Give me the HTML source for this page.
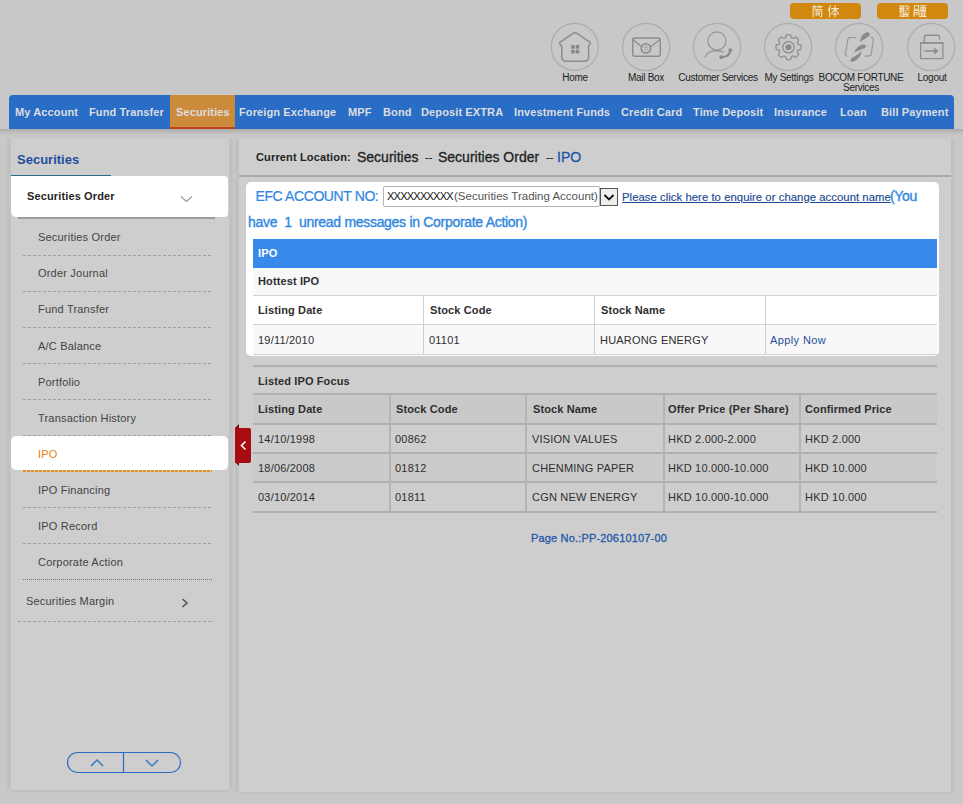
<!DOCTYPE html>
<html><head><meta charset="utf-8">
<style>
*{margin:0;padding:0;box-sizing:border-box}
html,body{width:963px;height:804px;overflow:hidden;background:#c8c8c8;font-family:"Liberation Sans",sans-serif;position:relative}
.a{position:absolute;white-space:nowrap;line-height:1}
.lang{position:absolute;top:2.5px;width:71px;height:16px;background:#d2870f;border-radius:4px;color:#f6ead6;font-size:11px;line-height:18.5px;text-align:center;letter-spacing:5px;text-indent:5px}
.ico{position:absolute;top:23px;width:48px;height:48px;border:1px solid #b0b0b0;border-radius:50%}
.ico svg{position:absolute;left:0;top:0}
.lbl{position:absolute;font-size:10px;line-height:10px;margin-top:1px;color:#222;text-align:center;letter-spacing:-0.3px;width:100px;white-space:nowrap}
#nav{position:absolute;left:9px;top:95px;width:945px;height:34px;background:#2a6dc6;border-radius:4px 4px 0 0}
#navsh{position:absolute;left:0;top:129px;width:963px;height:10px;background:linear-gradient(#a9a9a9 0,#b4b4b4 1.5px,#bdbdbd 3.5px,#c3c3c3 5px,#c8c8c8 6.5px)}
.ni{position:absolute;top:107px;font-size:11px;font-weight:bold;color:#dcdde0;line-height:11px;white-space:nowrap;letter-spacing:0.12px}
#sectab{position:absolute;left:170px;top:95px;width:65px;height:34px;background:#cc8b3a;border-bottom:2px solid #c0441f}
.panel{position:absolute;background:#cecece}
.strip{position:absolute;background:#c1c1c1}
.mi{position:absolute;left:38px;font-size:11px;color:#444;line-height:11px;white-space:nowrap;letter-spacing:0.2px}
.dash{position:absolute;left:23px;width:189px;height:1px;background:repeating-linear-gradient(90deg,#a0a0a0 0 3px,transparent 3px 5px)}
.t{position:absolute;font-size:11px;line-height:11px;color:#2e2e2e;white-space:nowrap;letter-spacing:0.2px}
.tb{font-weight:bold;letter-spacing:0.12px}
.hl{position:absolute;height:1px;background:#d0d0d0}
.vl{position:absolute;width:1px;background:#d0d0d0}
.hl2{position:absolute;height:2px;background:#afafaf}
.vl2{position:absolute;width:2px;background:#b4b4b4}
</style></head><body>

<!-- language buttons -->
<div class="lang" style="left:790px"></div>
<svg class="a" style="left:812px;top:5px" width="28" height="13" viewBox="0 0 28 13" fill="none" stroke="#f2e4cc" stroke-width="1.05" stroke-linecap="square">
<path d="M2 0.8 L0.8 2.8 M1.5 1.6 H4.5 M3 1.6 V2.8 M7 0.8 L5.8 2.8 M6.5 1.6 H10 M8.3 1.6 V2.8"/>
<path d="M1.2 4.2 V11.6 M2.2 3.6 L2.8 4.2 M3.6 4.6 H9.6 V11 Q9.6 11.8 8.6 11.6"/>
<path d="M4 6.3 H7.2 V10 H4 Z M4 8.2 H7.2"/>
<path d="M18.5 0.6 L16.4 5.2 M17.6 3.2 V11.8 M19.6 3.6 H26.4 M23 0.6 V11.8 M23 3.8 L19.4 8.8 M23 3.8 L26.6 8.8 M21 9.2 H25"/>
</svg>
<div class="lang" style="left:877px"></div>
<svg class="a" style="left:899px;top:5px" width="28" height="12" viewBox="0 0 28 12" fill="none" stroke="#f2e4cc" stroke-width="1.05" stroke-linecap="square">
<path d="M0.8 1 H5 M1.2 1 V6.5 M4.6 1 V6.5 M0.8 3.6 H5 M0.8 6.2 H5 M2.8 1.5 V6"/>
<path d="M6.4 0.8 L9.8 1.6 M7 2.8 L10 5.6 M10 2.8 L6.6 5.8"/>
<path d="M0.6 8 H10.2 M2 9.6 L1 11.2 M4.2 8.6 V11.4 M5.4 9.6 H8.6 M8.2 9.8 L9.6 11.2 M1.8 11.2 H8"/>
<path d="M15.4 0.8 H19.6 V4.2 H15.4 Z M15 5.4 V11.6 M15 5.4 H20 V11.6 M16.2 7.4 H18.8 M16.2 9.2 H18.8"/>
<path d="M21.2 0.8 H27 M21.8 2.4 H26.4 V5.4 H21.8 Z M24.1 0.8 V5.4 M21.8 3.9 H26.4 M21.6 6.8 H26.6 M22.2 8.2 H26 V10 H22.2 Z M23 10.6 L22.6 11.4 M25.4 10.6 L25.8 11.4 M21.2 11.6 H27"/>
</svg>

<!-- header icons -->
<svg class="a" style="left:550px;top:22px" width="50" height="50" viewBox="0 0 50 50"><circle cx="24.8" cy="24.9" r="23.5" fill="none" stroke="#adadad" stroke-width="1.25"/><path d="M11.8 24 L9.9 22.1 Q9 21 10.3 20.1 L23 11.3 Q25 10 27 11.3 L39.7 20.1 Q41 21 40.1 22.1 L38.6 24 L38.6 35 Q38.6 39.3 34.3 39.3 L16.1 39.3 Q11.8 39.3 11.8 35 Z" fill="none" stroke="#8d8d8d" stroke-width="1.5" stroke-linejoin="round"/><rect x="21.2" y="23.1" width="3.5" height="3.6" fill="#878787"/><rect x="25.7" y="23.1" width="3.5" height="3.6" fill="#878787"/><rect x="21.2" y="27.8" width="3.5" height="3.6" fill="#878787"/><rect x="25.7" y="27.8" width="3.5" height="3.6" fill="#878787"/></svg>
<svg class="a" style="left:621px;top:22px" width="50" height="50" viewBox="0 0 50 50"><circle cx="25.1" cy="25" r="23.6" fill="none" stroke="#adadad" stroke-width="1.25"/><rect x="11.7" y="16" width="27.6" height="18.2" rx="2" fill="none" stroke="#8d8d8d" stroke-width="1.4"/><path d="M12 17.6 L20.3 24.6 M38.9 17.6 L30 24.6" stroke="#8d8d8d" stroke-width="1.3" fill="none"/><circle cx="24.9" cy="26.4" r="4.6" fill="none" stroke="#8a8a8a" stroke-width="1.6"/><path d="M23 25.8 H26.8 M23.2 27.6 Q25 29.2 26.8 27.6 M23.4 24.6 Q25 23.2 26.6 24.6" stroke="#999" stroke-width="0.8" fill="none"/></svg>
<svg class="a" style="left:692px;top:22px" width="50" height="50" viewBox="0 0 50 50"><circle cx="25" cy="25" r="23.6" fill="none" stroke="#adadad" stroke-width="1.25"/><circle cx="24.9" cy="19" r="9.1" fill="none" stroke="#939393" stroke-width="1.2"/><path d="M12.8 35.6 Q15.5 29.2 22 28.9 Q28.5 28.7 32 30.3" fill="none" stroke="#939393" stroke-width="1.1"/><path d="M38.2 28.2 Q38 34.8 29.3 35.2" fill="none" stroke="#8a8a8a" stroke-width="2.1" stroke-linecap="round"/><circle cx="38.3" cy="28.2" r="1.9" fill="#8a8a8a"/><circle cx="29.2" cy="35.2" r="1.9" fill="#8a8a8a"/></svg>
<svg class="a" style="left:763px;top:22px" width="50" height="50" viewBox="0 0 50 50"><circle cx="25.1" cy="25" r="23.6" fill="none" stroke="#adadad" stroke-width="1.25"/><path d="M38.00 25.20 L38.00 25.45 L37.99 25.69 L37.97 25.94 L37.95 26.18 L37.92 26.42 L37.87 26.66 L37.81 26.90 L37.70 27.13 L37.53 27.35 L37.25 27.54 L36.85 27.69 L36.35 27.80 L35.84 27.90 L35.42 28.00 L35.12 28.12 L34.90 28.26 L34.75 28.41 L34.63 28.57 L34.54 28.74 L34.46 28.91 L34.39 29.09 L34.34 29.28 L34.31 29.47 L34.31 29.69 L34.36 29.94 L34.50 30.24 L34.72 30.61 L35.01 31.03 L35.29 31.46 L35.46 31.86 L35.52 32.19 L35.49 32.46 L35.41 32.70 L35.29 32.91 L35.15 33.12 L35.00 33.31 L34.84 33.50 L34.68 33.68 L34.51 33.86 L34.34 34.04 L34.16 34.21 L33.98 34.38 L33.80 34.54 L33.61 34.70 L33.42 34.85 L33.21 34.99 L33.00 35.11 L32.76 35.19 L32.49 35.22 L32.16 35.16 L31.76 34.99 L31.33 34.71 L30.91 34.42 L30.54 34.20 L30.24 34.06 L29.99 34.01 L29.77 34.01 L29.58 34.04 L29.39 34.09 L29.21 34.16 L29.04 34.24 L28.87 34.33 L28.71 34.45 L28.56 34.60 L28.42 34.82 L28.30 35.12 L28.20 35.54 L28.10 36.05 L27.99 36.55 L27.84 36.95 L27.65 37.23 L27.43 37.40 L27.20 37.51 L26.96 37.57 L26.72 37.62 L26.48 37.65 L26.24 37.67 L25.99 37.69 L25.75 37.70 L25.50 37.70 L25.25 37.70 L25.01 37.69 L24.76 37.67 L24.52 37.65 L24.28 37.62 L24.04 37.57 L23.80 37.51 L23.57 37.40 L23.35 37.23 L23.16 36.95 L23.01 36.55 L22.90 36.05 L22.80 35.54 L22.70 35.12 L22.58 34.82 L22.44 34.60 L22.29 34.45 L22.13 34.33 L21.96 34.24 L21.79 34.16 L21.61 34.09 L21.42 34.04 L21.23 34.01 L21.01 34.01 L20.76 34.06 L20.46 34.20 L20.09 34.42 L19.67 34.71 L19.24 34.99 L18.84 35.16 L18.51 35.22 L18.24 35.19 L18.00 35.11 L17.79 34.99 L17.58 34.85 L17.39 34.70 L17.20 34.54 L17.02 34.38 L16.84 34.21 L16.66 34.04 L16.49 33.86 L16.32 33.68 L16.16 33.50 L16.00 33.31 L15.85 33.12 L15.71 32.91 L15.59 32.70 L15.51 32.46 L15.48 32.19 L15.54 31.86 L15.71 31.46 L15.99 31.03 L16.28 30.61 L16.50 30.24 L16.64 29.94 L16.69 29.69 L16.69 29.47 L16.66 29.28 L16.61 29.09 L16.54 28.91 L16.46 28.74 L16.37 28.57 L16.25 28.41 L16.10 28.26 L15.88 28.12 L15.58 28.00 L15.16 27.90 L14.65 27.80 L14.15 27.69 L13.75 27.54 L13.47 27.35 L13.30 27.13 L13.19 26.90 L13.13 26.66 L13.08 26.42 L13.05 26.18 L13.03 25.94 L13.01 25.69 L13.00 25.45 L13.00 25.20 L13.00 24.95 L13.01 24.71 L13.03 24.46 L13.05 24.22 L13.08 23.98 L13.13 23.74 L13.19 23.50 L13.30 23.27 L13.47 23.05 L13.75 22.86 L14.15 22.71 L14.65 22.60 L15.16 22.50 L15.58 22.40 L15.88 22.28 L16.10 22.14 L16.25 21.99 L16.37 21.83 L16.46 21.66 L16.54 21.49 L16.61 21.31 L16.66 21.12 L16.69 20.93 L16.69 20.71 L16.64 20.46 L16.50 20.16 L16.28 19.79 L15.99 19.37 L15.71 18.94 L15.54 18.54 L15.48 18.21 L15.51 17.94 L15.59 17.70 L15.71 17.49 L15.85 17.28 L16.00 17.09 L16.16 16.90 L16.32 16.72 L16.49 16.54 L16.66 16.36 L16.84 16.19 L17.02 16.02 L17.20 15.86 L17.39 15.70 L17.58 15.55 L17.79 15.41 L18.00 15.29 L18.24 15.21 L18.51 15.18 L18.84 15.24 L19.24 15.41 L19.67 15.69 L20.09 15.98 L20.46 16.20 L20.76 16.34 L21.01 16.39 L21.23 16.39 L21.42 16.36 L21.61 16.31 L21.79 16.24 L21.96 16.16 L22.13 16.07 L22.29 15.95 L22.44 15.80 L22.58 15.58 L22.70 15.28 L22.80 14.86 L22.90 14.35 L23.01 13.85 L23.16 13.45 L23.35 13.17 L23.57 13.00 L23.80 12.89 L24.04 12.83 L24.28 12.78 L24.52 12.75 L24.76 12.73 L25.01 12.71 L25.25 12.70 L25.50 12.70 L25.75 12.70 L25.99 12.71 L26.24 12.73 L26.48 12.75 L26.72 12.78 L26.96 12.83 L27.20 12.89 L27.43 13.00 L27.65 13.17 L27.84 13.45 L27.99 13.85 L28.10 14.35 L28.20 14.86 L28.30 15.28 L28.42 15.58 L28.56 15.80 L28.71 15.95 L28.87 16.07 L29.04 16.16 L29.21 16.24 L29.39 16.31 L29.58 16.36 L29.77 16.39 L29.99 16.39 L30.24 16.34 L30.54 16.20 L30.91 15.98 L31.33 15.69 L31.76 15.41 L32.16 15.24 L32.49 15.18 L32.76 15.21 L33.00 15.29 L33.21 15.41 L33.42 15.55 L33.61 15.70 L33.80 15.86 L33.98 16.02 L34.16 16.19 L34.34 16.36 L34.51 16.54 L34.68 16.72 L34.84 16.90 L35.00 17.09 L35.15 17.28 L35.29 17.49 L35.41 17.70 L35.49 17.94 L35.52 18.21 L35.46 18.54 L35.29 18.94 L35.01 19.37 L34.72 19.79 L34.50 20.16 L34.36 20.46 L34.31 20.71 L34.31 20.93 L34.34 21.12 L34.39 21.31 L34.46 21.49 L34.54 21.66 L34.63 21.83 L34.75 21.99 L34.90 22.14 L35.12 22.28 L35.42 22.40 L35.84 22.50 L36.35 22.60 L36.85 22.71 L37.25 22.86 L37.53 23.05 L37.70 23.27 L37.81 23.50 L37.87 23.74 L37.92 23.98 L37.95 24.22 L37.97 24.46 L37.99 24.71 L38.00 24.95 Z" fill="none" stroke="#8f8f8f" stroke-width="1.3" stroke-linejoin="round"/><circle cx="25.5" cy="25.2" r="5.7" fill="none" stroke="#8f8f8f" stroke-width="1.3"/><circle cx="25.5" cy="25.2" r="2.9" fill="#8a8a8a"/></svg>
<svg class="a" style="left:834px;top:22px" width="50" height="50" viewBox="0 0 50 50"><circle cx="25.1" cy="25" r="23.6" fill="none" stroke="#adadad" stroke-width="1.25"/><path d="M22 15.6 L15.6 15.6 Q14.2 15.6 14 17 L11.4 32 Q11.2 33.9 13.4 34.1" fill="none" stroke="#9a9a9a" stroke-width="1.3"/><path d="M37 15.3 Q39.6 15.5 39.3 18 L37.2 32.4 Q36.9 34 35 34 L30.5 34.1" fill="none" stroke="#9a9a9a" stroke-width="1.3"/><path d="M26 20.2 C26.3 15 29 11.2 32.8 10.4 C35 10 36.2 11.8 35.6 13.2 C34.8 14.8 31 16.2 26 20.2 Z" fill="#8a8a8a"/><path d="M20.2 30.8 C21.5 26 25.5 22.8 29.9 22.4 C31.5 22.3 32.2 23.6 31.5 25.6 C30.5 26.8 26 27.6 20.2 30.8 Z" fill="#8a8a8a"/><path d="M27.4 29.2 C27.6 33.5 23.8 37.8 18.7 39.8 C17.2 40.2 16.2 39.2 16.6 37.2 C18 35.5 22 34.5 27.4 29.2 Z" fill="#8a8a8a"/></svg>
<svg class="a" style="left:906px;top:22px" width="50" height="50" viewBox="0 0 50 50"><circle cx="25.2" cy="25" r="23.6" fill="none" stroke="#adadad" stroke-width="1.25"/><rect x="14.6" y="20.9" width="22.3" height="15.7" fill="none" stroke="#8f8f8f" stroke-width="1.3"/><path d="M14 20.9 H37.4" stroke="#8f8f8f" stroke-width="1.7"/><path d="M18.3 20.6 V15.3 Q18.3 13.3 20.3 13.3 L31.6 13.3 Q33.6 13.3 33.6 15.3 V17.4" fill="none" stroke="#8f8f8f" stroke-width="1.4"/><path d="M18.5 29 H28.6" stroke="#8a8a8a" stroke-width="1.4"/><path d="M28.2 25.7 L32.6 29 L28.2 32.4 Z" fill="#8a8a8a"/></svg>
<div class="lbl" style="left:525px;top:72px">Home</div>
<div class="lbl" style="left:596px;top:72px">Mail Box</div>
<div class="lbl" style="left:668px;top:72px">Customer Services</div>
<div class="lbl" style="left:739px;top:72px">My Settings</div>
<div class="lbl" style="left:811px;top:72px">BOCOM FORTUNE</div>
<div class="lbl" style="left:811px;top:82px">Services</div>
<div class="lbl" style="left:882px;top:72px">Logout</div>

<!-- nav -->
<div id="nav"></div>
<div id="sectab"></div>
<div id="navsh"></div>
<div class="ni" style="left:15px">My Account</div>
<div class="ni" style="left:89px">Fund Transfer</div>
<div class="ni" style="left:176px">Securities</div>
<div class="ni" style="left:239px">Foreign Exchange</div>
<div class="ni" style="left:348px">MPF</div>
<div class="ni" style="left:383px">Bond</div>
<div class="ni" style="left:421px">Deposit EXTRA</div>
<div class="ni" style="left:514px">Investment Funds</div>
<div class="ni" style="left:621px">Credit Card</div>
<div class="ni" style="left:693px">Time Deposit</div>
<div class="ni" style="left:774px">Insurance</div>
<div class="ni" style="left:840px">Loan</div>
<div class="ni" style="left:881px">Bill Payment</div>

<!-- left panel -->
<div class="strip" style="left:7px;top:139px;width:4px;height:651px"></div>
<div class="strip" style="left:229px;top:139px;width:4px;height:651px"></div>
<div class="strip" style="left:11px;top:790px;width:218px;height:2px"></div>
<div class="panel" style="left:11px;top:139px;width:218px;height:651px"></div>

<!-- right panel -->
<div class="strip" style="left:235px;top:139px;width:4px;height:653px"></div>
<div class="strip" style="left:951px;top:139px;width:4px;height:653px"></div>
<div class="strip" style="left:239px;top:792px;width:712px;height:2px"></div>
<div class="panel" style="left:239px;top:139px;width:712px;height:653px"></div>


<!-- left menu -->
<div class="a" style="left:17px;top:153px;font-size:13px;font-weight:bold;color:#1d4f9c">Securities</div>
<div class="a" style="left:11px;top:175px;width:100px;height:1px;background:#2a6a88"></div>
<div class="a" style="left:11px;top:176px;width:217px;height:41px;background:#fff;border-radius:0 4px 4px 5px"></div>
<div class="a" style="left:27px;top:191px;font-size:11px;font-weight:bold;color:#262626;letter-spacing:0.13px">Securities Order</div>
<svg class="a" style="left:180px;top:195px" width="13" height="8" viewBox="0 0 13 8"><path d="M1 1.5 L6.5 6.5 L12 1.5" fill="none" stroke="#9a9a9a" stroke-width="1.2"/></svg>
<div class="a" style="left:18px;top:217px;width:197px;height:2px;background:#9c9c9c"></div>
<div class="mi" style="top:232px">Securities Order</div>
<div class="dash" style="top:255px"></div>
<div class="mi" style="top:268px">Order Journal</div>
<div class="dash" style="top:291px"></div>
<div class="mi" style="top:304px">Fund Transfer</div>
<div class="dash" style="top:327px"></div>
<div class="mi" style="top:341px">A/C Balance</div>
<div class="dash" style="top:363px"></div>
<div class="mi" style="top:377px">Portfolio</div>
<div class="dash" style="top:399px"></div>
<div class="mi" style="top:413px">Transaction History</div>
<div class="dash" style="top:435px"></div>
<div class="a" style="left:11px;top:436px;width:217px;height:34px;background:#fff;border-radius:5px"></div>
<div class="mi" style="top:449px;color:#e67d0c">IPO</div>
<div class="a" style="left:23px;top:470px;width:189px;height:2px;background:repeating-linear-gradient(90deg,#e0901e 0 3px,transparent 3px 4px)"></div>
<div class="mi" style="top:485px">IPO Financing</div>
<div class="dash" style="top:507px"></div>
<div class="mi" style="top:521px">IPO Record</div>
<div class="dash" style="top:543px"></div>
<div class="mi" style="top:557px">Corporate Action</div>
<div class="a" style="left:23px;top:579px;width:189px;height:1px;background:repeating-linear-gradient(90deg,#777 0 1px,transparent 1px 2px)"></div>
<div class="mi" style="left:26px;top:596px">Securities Margin</div>
<svg class="a" style="left:181px;top:598px" width="8" height="10" viewBox="0 0 8 10"><path d="M1.5 1 L6 5 L1.5 9" fill="none" stroke="#555" stroke-width="1.6"/></svg>
<div class="a" style="left:18px;top:621px;width:196px;height:1px;background:repeating-linear-gradient(90deg,#a0a0a0 0 3px,transparent 3px 5px)"></div>
<svg class="a" style="left:66px;top:751px" width="116" height="23" viewBox="0 0 116 23"><rect x="1.5" y="1.5" width="113" height="20" rx="10" ry="10" fill="none" stroke="#2c6cc0" stroke-width="1.2"/><line x1="57.5" y1="1.5" x2="57.5" y2="21.5" stroke="#2c6cc0" stroke-width="1.2"/><path d="M25 15 L31 9 L37 15" fill="none" stroke="#3a78c8" stroke-width="1.5"/><path d="M80 9 L86 15 L92 9" fill="none" stroke="#3a78c8" stroke-width="1.5"/></svg>


<!-- right content -->
<div class="a" style="left:256px;top:152px;font-size:11px;font-weight:bold;color:#222;letter-spacing:0.15px">Current Location:</div>
<div class="a" style="left:357px;top:150px;font-size:14px;color:#222;-webkit-text-stroke:0.3px #222">Securities</div>
<div class="a" style="left:425px;top:152px;font-size:11px;color:#222;-webkit-text-stroke:0.2px #222">--</div>
<div class="a" style="left:438px;top:150px;font-size:14px;color:#222;-webkit-text-stroke:0.3px #222">Securities Order</div>
<div class="a" style="left:546px;top:152px;font-size:11px;color:#222;-webkit-text-stroke:0.2px #222">--</div>
<div class="a" style="left:557px;top:150px;font-size:14px;color:#1a56a8;-webkit-text-stroke:0.3px #1a56a8">IPO</div>
<div class="a" style="left:239px;top:175px;width:712px;height:2px;background:#a9a9a9"></div>

<!-- white box -->
<div class="a" style="left:246px;top:182px;width:693px;height:174px;background:#fff;border-radius:5px"></div>
<div class="a" style="left:255.5px;top:189px;font-size:14px;color:#2f86e0;letter-spacing:-0.4px;-webkit-text-stroke:0.2px #2f86e0">EFC ACCOUNT NO:</div>
<div class="a" style="left:383px;top:186px;width:217px;height:21px;border:1px solid #b4b4b4;border-radius:2px;background:#fff"></div>
<div class="a" style="left:387px;top:191px;font-size:11px;color:#111;letter-spacing:-0.75px">XXXXXXXXXX</div>
<div class="a" style="left:454px;top:191px;font-size:11.5px;color:#555">(Securities Trading Account)</div>
<div class="a" style="left:600px;top:188px;width:18px;height:18px;border:1px solid #555;background:#eee"></div>
<svg class="a" style="left:602px;top:190px" width="14" height="14" viewBox="0 0 14 14"><path d="M2.5 5 L7 9.5 L11.5 5" fill="none" stroke="#111" stroke-width="1.8"/></svg>
<div class="a" style="left:622px;top:192px;font-size:11.3px;color:#1b4a92;text-decoration:underline;letter-spacing:0.05px;-webkit-text-stroke:0.15px #1b4a92">Please click here to enquire or change account name</div>
<div class="a" style="left:890px;top:189px;font-size:14px;color:#2f86e0;letter-spacing:-0.3px;-webkit-text-stroke:0.35px #2f86e0">(You</div>
<div class="a" style="left:248px;top:215px;font-size:14px;color:#2f86e0;white-space:pre;letter-spacing:-0.3px;-webkit-text-stroke:0.35px #2f86e0">have  1  unread messages in Corporate Action)</div>

<!-- hottest IPO table -->
<div class="a" style="left:253px;top:239px;width:684px;height:29px;background:#3789ea"></div>
<div class="t tb" style="left:258px;top:248px;color:#fff">IPO</div>
<div class="a" style="left:253px;top:268px;width:684px;height:87px;background:#f8f8f8"></div>
<div class="a" style="left:253px;top:296px;width:684px;height:28px;background:#fff"></div>
<div class="hl" style="left:253px;top:295px;width:684px"></div>
<div class="hl" style="left:253px;top:324px;width:684px"></div>
<div class="hl" style="left:253px;top:354px;width:684px"></div>
<div class="vl" style="left:423px;top:296px;height:58px"></div>
<div class="vl" style="left:594px;top:296px;height:58px"></div>
<div class="vl" style="left:765px;top:296px;height:58px"></div>
<div class="t tb" style="left:258px;top:276px">Hottest IPO</div>
<div class="t tb" style="left:258px;top:305px">Listing Date</div>
<div class="t tb" style="left:430px;top:305px">Stock Code</div>
<div class="t tb" style="left:601px;top:305px">Stock Name</div>
<div class="t" style="left:258px;top:335px">19/11/2010</div>
<div class="t" style="left:429px;top:335px">01101</div>
<div class="t" style="left:600px;top:335px">HUARONG ENERGY</div>
<div class="t" style="left:770px;top:335px;color:#1f4f9a;letter-spacing:0.4px">Apply Now</div>

<!-- listed IPO focus table -->
<div class="hl2" style="left:253px;top:365px;width:684px"></div>
<div class="t tb" style="left:258px;top:376px">Listed IPO Focus</div>
<div class="a" style="left:253px;top:395px;width:684px;height:28px;background:#c9c9c9"></div>
<div class="a" style="left:253px;top:454px;width:684px;height:28px;background:#cbcbcb"></div>
<div class="hl2" style="left:253px;top:393px;width:684px"></div>
<div class="hl2" style="left:253px;top:423px;width:684px"></div>
<div class="hl2" style="left:253px;top:452px;width:684px"></div>
<div class="hl2" style="left:253px;top:481px;width:684px"></div>
<div class="hl2" style="left:253px;top:511px;width:684px"></div>
<div class="vl2" style="left:389px;top:395px;height:116px"></div>
<div class="vl2" style="left:525px;top:395px;height:116px"></div>
<div class="vl2" style="left:663px;top:395px;height:116px"></div>
<div class="vl2" style="left:799px;top:395px;height:116px"></div>
<div class="t tb" style="left:258px;top:404px">Listing Date</div>
<div class="t tb" style="left:396px;top:404px">Stock Code</div>
<div class="t tb" style="left:533px;top:404px">Stock Name</div>
<div class="t tb" style="left:668px;top:404px">Offer Price (Per Share)</div>
<div class="t tb" style="left:805px;top:404px">Confirmed Price</div>
<div class="t" style="left:258px;top:434px">14/10/1998</div>
<div class="t" style="left:395px;top:434px">00862</div>
<div class="t" style="left:532px;top:434px">VISION VALUES</div>
<div class="t" style="left:668px;top:434px">HKD 2.000-2.000</div>
<div class="t" style="left:805px;top:434px">HKD 2.000</div>
<div class="t" style="left:258px;top:463px">18/06/2008</div>
<div class="t" style="left:395px;top:463px">01812</div>
<div class="t" style="left:532px;top:463px">CHENMING PAPER</div>
<div class="t" style="left:668px;top:463px">HKD 10.000-10.000</div>
<div class="t" style="left:805px;top:463px">HKD 10.000</div>
<div class="t" style="left:258px;top:492px">03/10/2014</div>
<div class="t" style="left:395px;top:492px">01811</div>
<div class="t" style="left:532px;top:492px">CGN NEW ENERGY</div>
<div class="t" style="left:668px;top:492px">HKD 10.000-10.000</div>
<div class="t" style="left:805px;top:492px">HKD 10.000</div>
<div class="t" style="left:531px;top:533px;color:#2458a8;letter-spacing:0.17px;-webkit-text-stroke:0.3px #2458a8">Page No.:PP-20610107-00</div>

<!-- red tab -->
<svg class="a" style="left:234px;top:423px" width="18" height="44" viewBox="0 0 18 44"><path d="M1 5 L5 1 L5 5 Z" fill="#7a0a0a"/><path d="M1 39 L5 43 L5 39 Z" fill="#7a0a0a"/><path d="M1 5 H15 Q17 5 17 7 V38 Q17 40 15 40 H1 Z" fill="#a70c10"/><path d="M11.5 18.5 L7.5 22.5 L11.5 26.5" fill="none" stroke="#fff" stroke-width="1.6"/></svg>

</body></html>
